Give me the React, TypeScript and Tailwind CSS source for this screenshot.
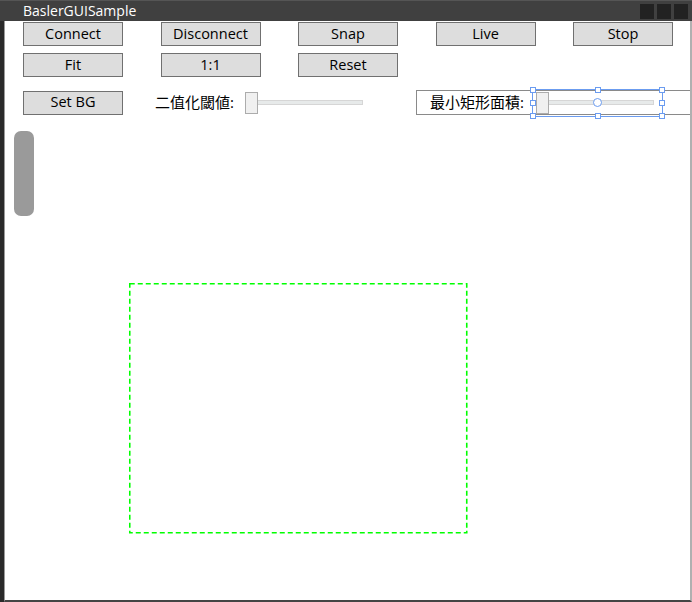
import React from 'react';

const font = { fontFamily: '"Open Sans", "Noto Sans", "Noto Sans CJK JP", sans-serif' };

const Btn = ({ label }: { label: string }) => (
  <button className="shrink-0 w-[100px] h-[24px] bg-[#dddddd] border border-[#707070] text-[14.5px] leading-none text-black whitespace-nowrap">
    {label}
  </button>
);

const Slider = () => (
  <div className="relative shrink-0 w-[118px] h-[22px] flex items-center">
    <div className="absolute left-[12px] right-0 h-[5px] bg-[#e7eaea] border border-[#d6d6d6]" />
    <div className="relative w-[13px] h-[22px] bg-[#f0f0f0] border border-[#acacac]" />
  </div>
);

const Handle = ({ className }: { className: string }) => (
  <div className={`absolute w-[6px] h-[6px] bg-white border border-[#6b9cf0] ${className}`} />
);

const App = () => {
  return (
    <div className="w-[692px] h-[602px] flex flex-col bg-[#2a2a2a] overflow-hidden" style={font}>
      {/* title bar */}
      <div className="h-[21px] flex items-center bg-[#404040] border-t border-[#555]">
        <span className="ml-[23px] text-white text-[14px] leading-none">BaslerGUISample</span>
        <div className="ml-auto mr-[4px] flex gap-[3px]">
          <div className="w-[14px] h-[15px] bg-[#222]" />
          <div className="w-[14px] h-[15px] bg-[#222]" />
          <div className="w-[14px] h-[15px] bg-[#222]" />
        </div>
      </div>

      <div className="flex-1 flex">
        <div className="w-[4px] bg-[#2a2a2a]" />
        <div className="flex-1 flex flex-col bg-white border-l border-[#9a9a9a] border-r-2 border-r-[#b0b0b0] border-b-2 border-b-[#444] overflow-hidden">
          {/* toolbar */}
          <div className="pl-[18px] pt-[1px] flex flex-col">
            <div className="flex gap-[37.5px]">
              <Btn label="Connect" />
              <Btn label="Disconnect" />
              <Btn label="Snap" />
              <Btn label="Live" />
              <Btn label="Stop" />
            </div>
            <div className="mt-[7px] flex gap-[37.5px]">
              <Btn label="Fit" />
              <Btn label="1:1" />
              <Btn label="Reset" />
            </div>
            <div className="mt-[13px] flex items-center">
              <Btn label="Set BG" />
              <span className="shrink-0 ml-[32px] text-[15px] text-black whitespace-nowrap">二值化閾値:</span>
              <div className="ml-[11px] shrink-0">
                <Slider />
              </div>
              <div className="ml-[53px] relative w-[300px] h-[25px] border border-[#8a8a8a] flex items-center shrink-0">
                <span className="shrink-0 ml-[13px] text-[15px] text-black whitespace-nowrap">最小矩形面積:</span>
                <div className="ml-[12px] relative shrink-0">
                  <Slider />
                  {/* selection adorner */}
                  <div className="absolute left-[-4px] top-[-3px] w-[131px] h-[28px] border border-[#6b9cf0]">
                    <Handle className="left-[-3px] top-[-3px]" />
                    <Handle className="left-[62px] top-[-3px]" />
                    <Handle className="right-[-3px] top-[-3px]" />
                    <Handle className="left-[-3px] top-[10px]" />
                    <Handle className="right-[-3px] top-[10px]" />
                    <Handle className="left-[-3px] bottom-[-3px]" />
                    <Handle className="left-[62px] bottom-[-3px]" />
                    <Handle className="right-[-3px] bottom-[-3px]" />
                    <div className="absolute left-[60px] top-[8px] w-[9px] h-[9px] rounded-full bg-white border border-[#6b9cf0]" />
                  </div>
                </div>
              </div>
            </div>
          </div>

          {/* image canvas */}
          <div className="relative flex-1">
            <div className="ml-[9px] mt-[16px] w-[20px] h-[85px] rounded-[7px] bg-[#9a9a9a]" />
            <svg className="absolute left-[124px] top-[168px]" width="340" height="252">
              <rect x="0.75" y="0.75" width="337" height="249" fill="none" stroke="#00ff00" strokeWidth="1.6" strokeDasharray="5 3" />
            </svg>
          </div>
        </div>
      </div>
    </div>
  );
};

export default App;
